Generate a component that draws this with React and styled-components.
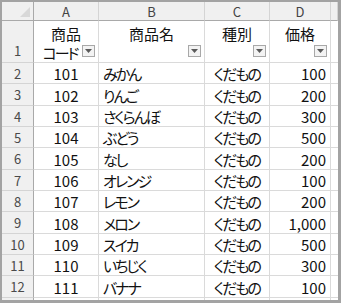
import React from "react";
import styled, { createGlobalStyle } from "styled-components";

const COLS = "32px 65px 106px 65px 61px 1fr";

const fruits = [
    ["101", "みかん", "くだもの", "100"],
    ["102", "りんご", "くだもの", "200"],
    ["103", "さくらんぼ", "くだもの", "300"],
    ["104", "ぶどう", "くだもの", "500"],
    ["105", "なし", "くだもの", "200"],
    ["106", "オレンジ", "くだもの", "100"],
    ["107", "レモン", "くだもの", "200"],
    ["108", "メロン", "くだもの", "1,000"],
    ["109", "スイカ", "くだもの", "500"],
    ["110", "いちじく", "くだもの", "300"],
    ["111", "バナナ", "くだもの", "100"],
];

// rows are ~21.3px in the picture, so mix 21 and 22
const rowHeights = [21, 22, 21, 21, 22, 21, 21, 22, 21, 21, 22];

const GlobalStyle = createGlobalStyle`
    body {
        margin: 0;
        background: #fff;
    }
`;

const FilterIcon = () => (
    <svg width="7" height="4" viewBox="0 0 7 4">
        <path d="M0 0 L7 0 L3.5 4 Z" fill="#5a5a5a" />
    </svg>
);

const App = () => {
    return (
        <>
            <GlobalStyle />
            <Frame>
                <Row $h={19}>
                    <Corner><Triangle /></Corner>
                    {["A", "B", "C", "D"].map((l) => (
                        <ColHead key={l}>{l}</ColHead>
                    ))}
                    <ColHead />
                </Row>
                <Row $h={42}>
                    <RowHead $bottom>1</RowHead>
                    <HeadCell>
                        <Line>商品</Line>
                        <Line $kana>コード</Line>
                        <FilterBtn><FilterIcon /></FilterBtn>
                    </HeadCell>
                    <HeadCell>
                        <Line>商品名</Line>
                        <FilterBtn><FilterIcon /></FilterBtn>
                    </HeadCell>
                    <HeadCell>
                        <Line>種別</Line>
                        <FilterBtn><FilterIcon /></FilterBtn>
                    </HeadCell>
                    <HeadCell>
                        <Line>価格</Line>
                        <FilterBtn><FilterIcon /></FilterBtn>
                    </HeadCell>
                    <Cell />
                </Row>
                {fruits.map((f, i) => (
                    <Row key={f[0]} $h={rowHeights[i]}>
                        <RowHead>{i + 2}</RowHead>
                        <Cell $align="center">{f[0]}</Cell>
                        <Cell $align="flex-start"><Kana>{f[1]}</Kana></Cell>
                        <Cell $align="center"><Kana>{f[2]}</Kana></Cell>
                        <Cell $align="flex-end">{f[3]}</Cell>
                        <Cell />
                    </Row>
                ))}
                <Row $h={4}>
                    <RowHead />
                    <Cell /><Cell /><Cell /><Cell /><Cell />
                </Row>
            </Frame>
        </>
    );
};

const Frame = styled.div`
    width: 341px;
    height: 303px;
    box-sizing: border-box;
    border-style: solid;
    border-color: #a3a3a3;
    border-width: 2px 3px 3px 2px;
    overflow: hidden;
    display: flex;
    flex-direction: column;
    font-family: "Noto Sans CJK JP", "Noto Sans", sans-serif;
    color: #111;
`;

const Row = styled.div`
    display: grid;
    grid-template-columns: ${COLS};
    height: ${(p) => p.$h}px;
    flex-shrink: 0;
`;

const Corner = styled.div`
    position: relative;
    background: #f0f0f0;
    border-right: 1px solid #a9a9a9;
    border-bottom: 1px solid #a9a9a9;
`;

const Triangle = styled.div`
    position: absolute;
    right: 3px;
    bottom: 3px;
    width: 0;
    height: 0;
    border-left: 10px solid transparent;
    border-bottom: 10px solid #d8d8d8;
`;

const ColHead = styled.div`
    background: #f0f0f0;
    border-right: 1px solid #d4d4d4;
    border-bottom: 1px solid #a9a9a9;
    display: flex;
    align-items: center;
    justify-content: center;
    font-size: 13px;
    color: #444;
    line-height: 1;
`;

const RowHead = styled.div`
    background: #f0f0f0;
    border-right: 1px solid #a9a9a9;
    border-bottom: 1px solid #d4d4d4;
    display: flex;
    justify-content: center;
    align-items: ${(p) => (p.$bottom ? "flex-end" : "center")};
    padding-bottom: ${(p) => (p.$bottom ? "2px" : "0")};
    box-sizing: border-box;
    font-size: 13px;
    color: #4a4a4a;
    line-height: 19px;
`;

const Cell = styled.div`
    border-right: 1px solid #dadada;
    border-bottom: 1px solid #dadada;
    display: flex;
    align-items: center;
    justify-content: ${(p) => p.$align || "flex-start"};
    padding: 1px 4px 0;
    box-sizing: border-box;
    font-size: 15px;
    white-space: nowrap;
    overflow: hidden;
`;

// kana are proportional and narrow in the source font
const Kana = styled.span`
    display: inline-block;
    font-feature-settings: "palt" 1;
    letter-spacing: -2px;
`;

const HeadCell = styled.div`
    position: relative;
    display: flex;
    flex-direction: column;
    align-items: center;
    border-right: 1px solid #dadada;
    border-bottom: 1px solid #dadada;
    padding-top: 3px;
    box-sizing: border-box;
    font-size: 15px;
    line-height: 19px;
`;

const Line = styled.div`
    font-feature-settings: ${(p) => (p.$kana ? '"palt" 1' : "normal")};
    letter-spacing: ${(p) => (p.$kana ? "-2px" : "0")};
    margin-right: ${(p) => (p.$kana ? "12px" : "0")};
    white-space: nowrap;
`;

const FilterBtn = styled.div`
    position: absolute;
    right: 3px;
    bottom: 5px;
    width: 13px;
    height: 12px;
    box-sizing: border-box;
    border: 1px solid #a8a8a8;
    background: #f3f3f3;
    display: flex;
    align-items: center;
    justify-content: center;
`;

export default App;
